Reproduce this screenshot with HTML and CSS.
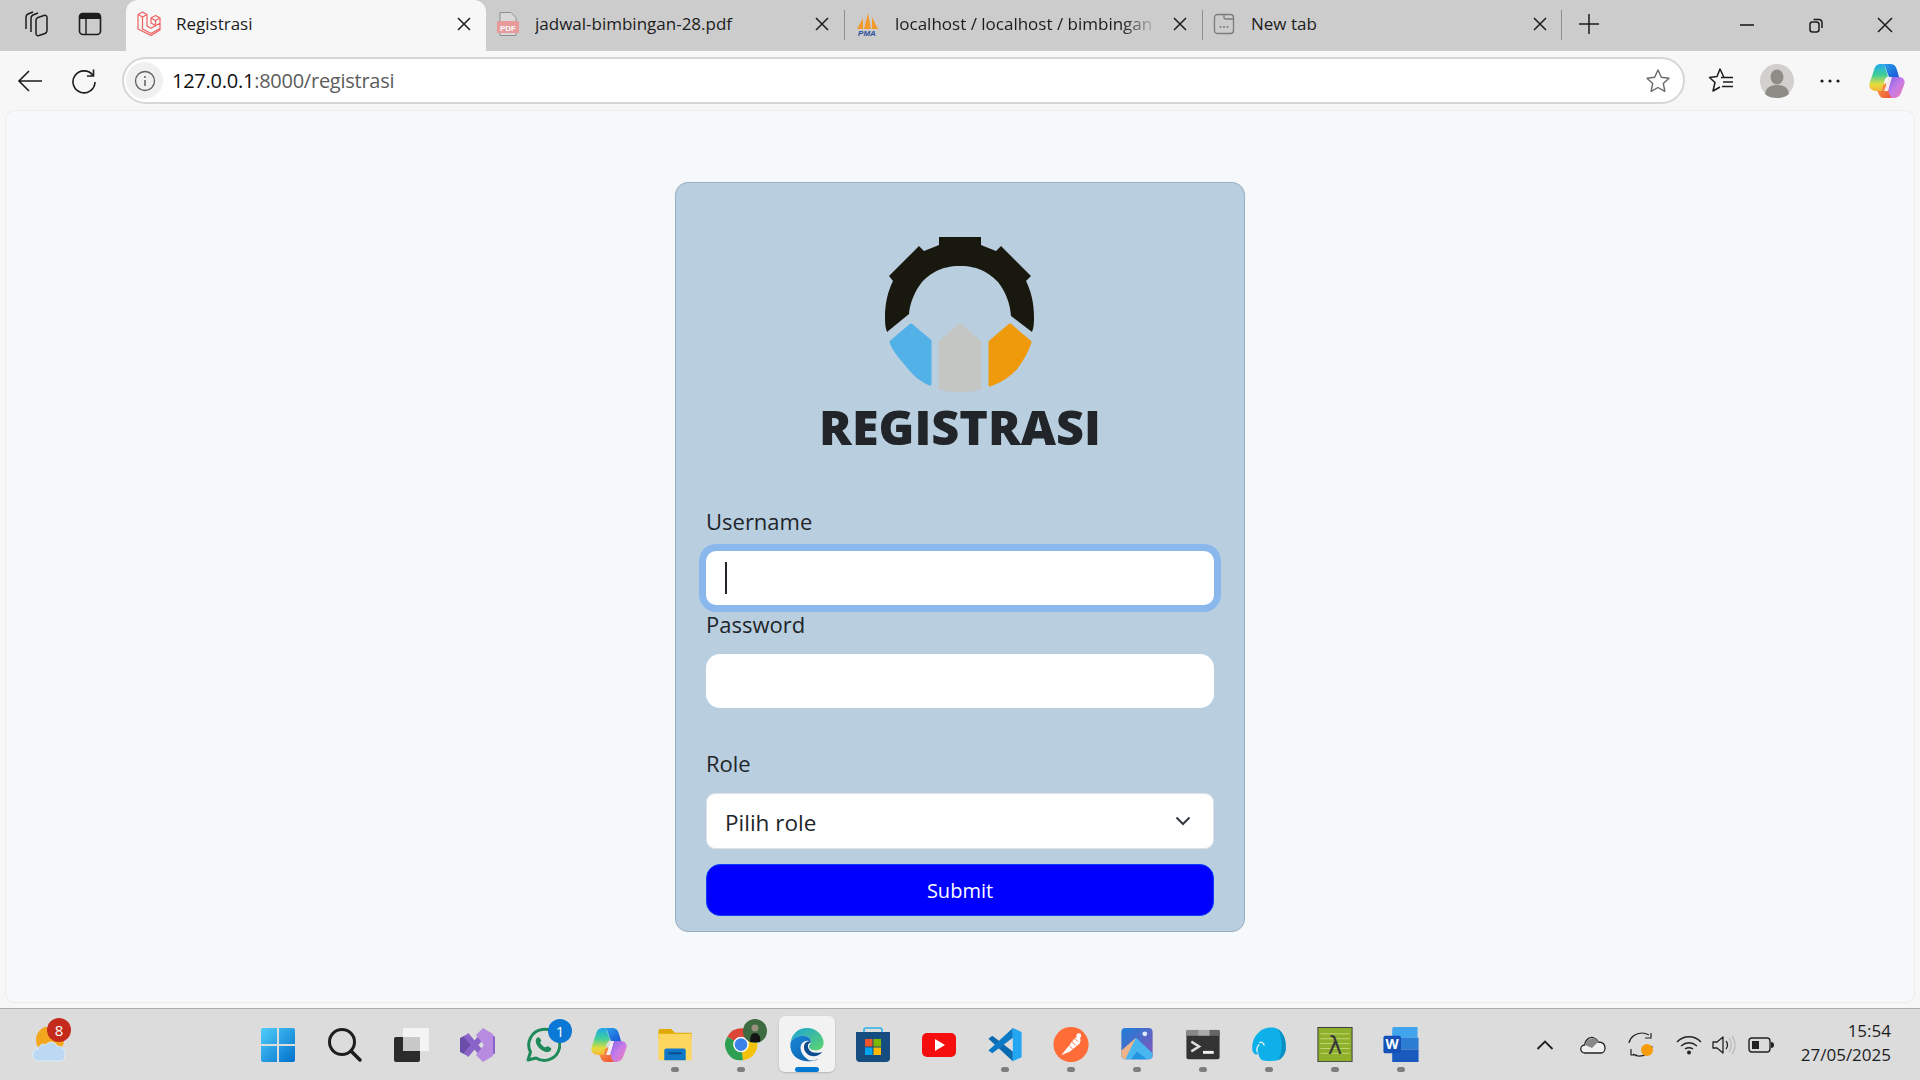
FILE: index.html
```html
<!DOCTYPE html>
<html>
<head>
    <meta charset="utf-8">
    <meta name="viewport" content="width=device-width, initial-scale=1">
    <title>Registrasi</title>
    <link rel="stylesheet" href="styles.css">
</head>
<body>

<svg class="sprite" width="0" height="0">
    <symbol id="x" viewBox="0 0 14 14"><path d="M1 1l12 12M13 1L1 13" fill="none" stroke="#1c1c1c" stroke-width="1.5"/></symbol>
    <linearGradient id="cop-left" x1="0" y1="0" x2="0" y2="1">
        <stop offset="0" stop-color="#22a8ea"/><stop offset=".4" stop-color="#3fcf9a"/><stop offset=".75" stop-color="#e6dc3c"/><stop offset="1" stop-color="#f5b53a"/>
    </linearGradient>
    <linearGradient id="cop-top" x1="0" y1="0" x2="1" y2="1">
        <stop offset="0" stop-color="#2aa6ea"/><stop offset="1" stop-color="#1a55d8"/>
    </linearGradient>
    <linearGradient id="cop-right" x1="0" y1="0" x2="1" y2="1">
        <stop offset="0" stop-color="#7a62e8"/><stop offset=".5" stop-color="#c77be8"/><stop offset="1" stop-color="#f07ab0"/>
    </linearGradient>
    <linearGradient id="cop-bot" x1="0" y1="0" x2="1" y2="1">
        <stop offset="0" stop-color="#f9a13a"/><stop offset="1" stop-color="#ee4f3a"/>
    </linearGradient>
    <symbol id="copilot" viewBox="0 0 36 36">
        <path d="M13 28H7c-5 0-8-4-6-9L5 7c1-4 3-6 7-6 3 0 4 2 5 6l2 6-3 3z" fill="url(#cop-left)"/>
        <path d="M12 1h10c3 0 5 2 6 6l2 7H20l-2-5c-1-4-2-8-6-8z" fill="url(#cop-top)"/>
        <path d="M20 14h9c5 0 8 3 6 8l-3 8c-1 3-4 5-8 5-3 0-4-2-5-5l-1-6z" fill="url(#cop-right)"/>
        <path d="M14 22l3-2 2 6c1 4 2 9 5 9H15c-3 0-5-2-6-6l-1-1h5z" fill="url(#cop-bot)"/>
        <path d="M20 14h3l-4 14h-4z" fill="#f6e9ef"/>
    </symbol>
</svg>

<header class="tabbar">
    <div class="tab-tools">
        <svg viewBox="0 0 26 26" width="26" height="26"><g fill="none" stroke="#1c1c1c" stroke-width="1.5"><path d="M13 9c0-1 1-2 2-2.500l6-2c2-.5 3 .5 3 2v13c0 1.500-1 2.500-2 3l-6 2c-2 .5-3-.5-3-2z"/><path d="M8 21V7c0-1.500 1-2.500 2-3l5-2"/><path d="M3 18V6c0-1.500 1-2.500 2-3l5-2"/></g></svg>
        <svg viewBox="0 0 26 26" width="26" height="26"><rect x="2.500" y="2.500" width="21" height="21" rx="3.500" fill="none" stroke="#1c1c1c" stroke-width="1.600"/><path d="M2 6a4 4 0 014-4h14a4 4 0 014 4v2H2z" fill="#1c1c1c"/><path d="M9 8v15" stroke="#1c1c1c" stroke-width="1.400"/></svg>
    </div>

    <div class="tab active">
        <svg class="fav" viewBox="0 0 24 25" width="24" height="25"><g fill="none" stroke="#f0605f" stroke-width="1.200" stroke-linejoin="round"><path d="M1 3.500L5.500 1 10 3.500V15l4 2.300 9-5V7M1 3.500V18l13 6.500 9-5.500v-7M1 3.500L5.500 6 10 3.500M5.500 6v12l8.500 4.500 9-5"/><path d="M14 7l4.500-2.500L23 7l-4.500 2.500zM14 7v5l4.500 2.500v-5"/></g></svg>
        <span class="tab-title">Registrasi</span>
        <svg class="tab-x"><use href="#x"/></svg>
    </div>
    <div class="tab">
        <svg class="fav" viewBox="0 0 24 26" width="24" height="26"><path d="M4 1.500h11l5 5v18H4z" fill="#d8d8d8" stroke="#8f8f8f"/><rect x="1" y="10" width="22" height="12" fill="#e79a9a"/><text x="12" y="19.500" class="pdf-txt">PDF</text></svg>
        <span class="tab-title">jadwal-bimbingan-28.pdf</span>
        <svg class="tab-x"><use href="#x"/></svg>
    </div>
    <div class="tab sep">
        <svg class="fav" viewBox="0 0 26 26" width="26" height="26"><path d="M3 18L9 7v11zM10 18l4-16 3 16zM18 18V6l6 12z" fill="#f29b2b"/><text x="13" y="25" class="pma-txt">PMA</text></svg>
        <span class="tab-title fade">localhost / localhost / bimbingan</span>
        <svg class="tab-x"><use href="#x"/></svg>
    </div>
    <div class="tab sep last">
        <svg class="fav" viewBox="0 0 24 24" width="24" height="24"><g fill="none" stroke="#7b7b7b" stroke-width="1.300"><rect x="2.500" y="2.500" width="19" height="19" rx="3"/><path d="M12 2.500v3a1.500 1.500 0 001.500 1.500h8"/></g><path d="M7.500 15h2M11 15h2M14.500 15h2" stroke="#7b7b7b" stroke-width="1.500"/></svg>
        <span class="tab-title">New tab</span>
        <svg class="tab-x"><use href="#x"/></svg>
    </div>
    <svg class="new-tab" viewBox="0 0 22 22" width="22" height="22"><path d="M11 1v20M1 11h20" stroke="#1c1c1c" stroke-width="1.500"/></svg>

    <div class="win-btns">
        <svg viewBox="0 0 16 16" width="16" height="16"><path d="M1 8h14" stroke="#1c1c1c" stroke-width="1.600"/></svg>
        <svg viewBox="0 0 16 16" width="16" height="16"><rect x="2" y="5" width="9" height="10" rx="2.500" fill="none" stroke="#1c1c1c" stroke-width="1.500"/><path d="M5.500 2.500h5.500a3 3 0 013 3V11" fill="none" stroke="#1c1c1c" stroke-width="1.500"/></svg>
        <svg viewBox="0 0 16 16" width="16" height="16"><path d="M1 1l14 14M15 1L1 15" stroke="#1c1c1c" stroke-width="1.500"/></svg>
    </div>
</header>

<nav class="toolbar">
    <svg class="nav-ico" viewBox="0 0 26 26" width="26" height="26"><path d="M25 13H2M12 3L2 13l10 10" fill="none" stroke="#1c1c1c" stroke-width="1.600"/></svg>
    <svg class="nav-ico" viewBox="0 0 26 26" width="26" height="26"><path d="M22 7.500A11 11 0 1024 14" fill="none" stroke="#1c1c1c" stroke-width="1.600"/><path d="M22.500 1.500v6.500H16" fill="none" stroke="#1c1c1c" stroke-width="1.600"/></svg>

    <div class="addr">
        <span class="addr-info">
            <svg viewBox="0 0 22 22" width="22" height="22"><circle cx="11" cy="11" r="9.500" fill="none" stroke="#5f5f5f" stroke-width="1.300"/><path d="M11 10v6" stroke="#5f5f5f" stroke-width="1.500"/><circle cx="11" cy="7" r="1" fill="#5f5f5f"/></svg>
        </span>
        <span class="url"><b>127.0.0.1</b>:8000/registrasi</span>
        <svg class="star" viewBox="0 0 26 26" width="26" height="26"><path d="M13 2l3.300 7.300 7.700.9-5.700 5.300 1.600 7.900L13 19.500l-6.900 3.900 1.600-7.900L2 10.200l7.700-.9z" fill="none" stroke="#6a6a6a" stroke-width="1.400" stroke-linejoin="round"/></svg>
    </div>

    <div class="nav-right">
        <svg viewBox="0 0 28 28" width="28" height="28"><path d="M16 10.500L12 2 9 9.500 1.500 10.500l5.500 5-2 8.500 7-4" fill="none" stroke="#1c1c1c" stroke-width="1.500" stroke-linejoin="round"/><path d="M13 10.500h12M15 15h10M14 19.500h11" stroke="#1c1c1c" stroke-width="1.500"/></svg>
        <span class="avatar"><svg viewBox="0 0 34 34" width="34" height="34"><circle cx="17" cy="17" r="17" fill="#d2d0cc"/><ellipse cx="17" cy="13" rx="6.500" ry="7.500" fill="#8f8c88"/><path d="M5 30c1-7 6-9 12-9s11 2 12 9c-3 3-8 4-12 4s-9-1-12-4z" fill="#8f8c88"/></svg></span>
        <svg viewBox="0 0 24 24" width="24" height="24"><circle cx="4" cy="12" r="1.600" fill="#1c1c1c"/><circle cx="12" cy="12" r="1.600" fill="#1c1c1c"/><circle cx="20" cy="12" r="1.600" fill="#1c1c1c"/></svg>
        <svg class="nav-copilot" viewBox="0 0 36 36" width="36" height="36"><use href="#copilot"/></svg>
    </div>
</nav>

<main class="page">
    <form class="card" action="#" onsubmit="return false">
        <svg class="logo" viewBox="0 0 150 155" width="150" height="155">
            <path d="M54 0h42v8l15 6 5-5 30 30-5 5c5 10 8 22 8 36 0 5 0 10-2 15l-21-16c-1-14-6-25-13-34-8-8-18-16-38-16s-30 8-38 16c-7 9-12 20-13 32L2 95C0 90 0 85 0 80c0-14 3-26 8-36l-4-5L34 9l5 5 15-6z" fill="#19180f"/>
            <g stroke-width="3" stroke-linejoin="round">
                <path d="M26 88l19 16v43c-8-3-15-9-20-15-7-9-16-17-19-27z" fill="#52b1e7" stroke="#52b1e7"/>
                <path d="M75 88l20 17v46c-12 4-28 4-40 0v-46z" fill="#c4c6c3" stroke="#c4c6c3"/>
                <path d="M125 88l20 17c-3 10-8 18-14 26-6 7-15 13-26 17v-43z" fill="#ef9a0a" stroke="#ef9a0a"/>
            </g>
        </svg>
        <h1 class="title">REGISTRASI</h1>

        <label class="lbl" for="username">Username</label>
        <div class="wrap-focus">
            <input class="inp focus" id="username" type="text">
            <span class="caret"></span>
        </div>

        <label class="lbl" for="password">Password</label>
        <input class="inp" id="password" type="password">

        <label class="lbl lbl-role" for="role">Role</label>
        <div class="wrap-select">
            <select class="sel" id="role">
                <option>Pilih role</option>
            </select>
            <svg class="chev" viewBox="0 0 16 10" width="16" height="10"><path d="M1.500 1.500L8 8l6.500-6.500" fill="none" stroke="#343a40" stroke-width="2"/></svg>
        </div>

        <button class="btn" type="submit">Submit</button>
    </form>
</main>

<footer class="taskbar">
    <div class="weather">
        <svg viewBox="0 0 36 36" width="36" height="36">
            <circle cx="18" cy="13" r="14" fill="#f2a71e"/>
            <path d="M7 34a6 6 0 01-1-12c1-4 5-6 8-4 2-4 9-4 11 1 5 0 8 3 8 8s-2 7-5 7z" fill="#bcd8f2" stroke="#e2eefa"/>
        </svg>
        <span class="badge red">8</span>
    </div>

    <div class="apps">
        <div class="app start">
            <svg viewBox="0 0 36 36" width="36" height="36">
                <defs><linearGradient id="w" x1="0" y1="0" x2="1" y2="1"><stop offset="0" stop-color="#50cdfb"/><stop offset="1" stop-color="#0070cc"/></linearGradient></defs>
                <path d="M1 3a2 2 0 012-2h14v16H1zM19 1h14a2 2 0 012 2v14H19zM1 19h16v16H3a2 2 0 01-2-2zM19 19h16v14a2 2 0 01-2 2H19z" fill="url(#w)"/>
            </svg>
        </div>
        <div class="app">
            <svg viewBox="0 0 36 36" width="36" height="36"><circle cx="15" cy="15" r="12.500" fill="none" stroke="#1e1e1e" stroke-width="3"/><path d="M24 24l9 9" stroke="#1e1e1e" stroke-width="3.500" stroke-linecap="round"/></svg>
        </div>
        <div class="app">
            <svg viewBox="0 0 36 36" width="36" height="36"><rect x="1" y="10" width="26" height="25" rx="2" fill="#2b2b2b"/><rect x="10" y="1" width="26" height="23" rx="1" fill="#f4f4f4"/><rect x="10" y="10" width="17" height="14" fill="#c8c8c8"/></svg>
        </div>
        <div class="app">
            <svg viewBox="0 0 36 36" width="36" height="36"><path d="M1 11l6-3 10 10-10 10-6-3z" fill="#6a4da8"/><path d="M7 8l17 20 10-4V12L24 8 7 28" fill="none" stroke="#8a63c8" stroke-width="6"/><path d="M24 1l10 6v22l-10 6-7-7 8-10-8-10z" fill="#b78be0"/></svg>
        </div>
        <div class="app">
            <svg viewBox="0 0 36 36" width="36" height="36"><path d="M3 33l2.500-8A15.500 15.500 0 1111 31z" fill="none" stroke="#1e8a5a" stroke-width="3" stroke-linejoin="round"/><path d="M12 11c2-2 3 0 4 2 1 2-2 2 0 4s3 4 5 3c2-2 3 0 5 1 1 2-1 4-4 4-5 0-13-7-11-13z" fill="#1e8a5a"/></svg>
            <span class="badge blue">1</span>
        </div>
        <div class="app">
            <svg viewBox="0 0 36 36" width="36" height="36"><use href="#copilot"/></svg>
        </div>
        <div class="app open">
            <svg viewBox="0 0 36 36" width="36" height="36"><path d="M1 4a2 2 0 012-2h11l4 4h17v6H1z" fill="#e0a800"/><path d="M1 7h34v27H1z" fill="#fcd65e"/><path d="M7 24a2 2 0 012-2h18a2 2 0 012 2v10H7z" fill="#0f78c8"/><path d="M11 27h14" stroke="#0b4f8a" stroke-width="2"/></svg>
            <i class="pill"></i>
        </div>
        <div class="app open">
            <svg viewBox="0 0 36 36" width="36" height="36">
                <path d="M18 18L4 10A16 16 0 0132 9z" fill="#db4437"/>
                <path d="M18 18L32 9a16 16 0 01-12 25z" fill="#f4c20d"/>
                <path d="M18 18l2 16A16 16 0 014 10z" fill="#2e9e50"/>
                <circle cx="18" cy="18" r="8" fill="#fff"/><circle cx="18" cy="18" r="6.500" fill="#3b82e8"/>
            </svg>
            <span class="chrome-face"><svg viewBox="0 0 24 24" width="24" height="24"><circle cx="12" cy="12" r="12" fill="#3f6b40"/><path d="M7 23c0-5 1-9 5-9s6 4 5 9z" fill="#141414"/><circle cx="12" cy="9" r="3.500" fill="#9a9080"/></svg></span>
            <i class="pill"></i>
        </div>
        <div class="app active">
            <svg viewBox="0 0 36 36" width="36" height="36">
                <defs>
                    <linearGradient id="e1" x1="0" y1="0" x2="1" y2="1"><stop offset="0" stop-color="#1aa3d8"/><stop offset="1" stop-color="#5fd66a"/></linearGradient>
                    <linearGradient id="e2" x1="0" y1="0" x2="1" y2="1"><stop offset="0" stop-color="#1888d8"/><stop offset="1" stop-color="#0b5aa8"/></linearGradient>
                </defs>
                <path d="M1 17C2 7 9 1 18 1c10 0 17 8 17 15 0 5-3 8-8 8-4 0-7-2-7-4 0-2 2-2 2-5s-3-6-8-6C8 9 2 12 1 17z" fill="url(#e1)"/>
                <path d="M1 17C2 12 8 9 14 9c5 0 8 3 8 6-3-2-8-1-10 3-2 5 1 12 8 16 3 1 7 0 10-2-3 3-7 3-12 3C8 35 0 28 1 17z" fill="url(#e2)"/>
                <path d="M22 15c-2-1-6 0-7 4-1 6 4 11 10 11 3 0 7-2 9-5-3 2-8 2-12 0-3-2-4-6-2-8 1-1 2-1 2-2z" fill="#0c4d8f"/>
            </svg>
            <i class="pill"></i>
        </div>
        <div class="app">
            <svg viewBox="0 0 36 36" width="36" height="36"><path d="M9 7V3a2 2 0 012-2h14a2 2 0 012 2v4" fill="none" stroke="#2cb0e8" stroke-width="1.600"/><path d="M1 5h34v26a4 4 0 01-4 4H5a4 4 0 01-4-4z" fill="#164d80"/><rect x="10" y="12" width="7.500" height="7.500" fill="#f0542a"/><rect x="18.500" y="12" width="7.500" height="7.500" fill="#7fba00"/><rect x="10" y="20.500" width="7.500" height="7.500" fill="#00a4ef"/><rect x="18.500" y="20.500" width="7.500" height="7.500" fill="#ffb900"/></svg>
        </div>
        <div class="app">
            <svg viewBox="0 0 36 36" width="36" height="36"><rect x="1" y="6" width="34" height="24" rx="5" fill="#f60d0d"/><path d="M14 12l10 6-10 6z" fill="#fff"/></svg>
        </div>
        <div class="app open">
            <svg viewBox="0 0 36 36" width="36" height="36"><path d="M26 35L1 12l4-3 21 16z" fill="#0a6ab0"/><path d="M26 1L1 24l4 3 21-16z" fill="#0b7ac6"/><path d="M26 1l9 4v26l-9 4z" fill="#23a7f2"/></svg>
            <i class="pill"></i>
        </div>
        <div class="app open">
            <svg viewBox="0 0 36 36" width="36" height="36"><circle cx="18" cy="18" r="18" fill="#ff6c37"/><path d="M8 29l8-10 6-8 4-1 2 3-1 4-10 8z" fill="#fff"/><circle cx="26" cy="9" r="2.500" fill="#fff"/><path d="M15 18l5 5M18 14l5 5M21 11l4 4" stroke="#ff6c37"/></svg>
            <i class="pill"></i>
        </div>
        <div class="app open">
            <svg viewBox="0 0 36 36" width="36" height="36"><defs><linearGradient id="ph" x1="0" y1="0" x2="1" y2="1"><stop offset="0" stop-color="#1a7fd8"/><stop offset="1" stop-color="#8a52b8"/></linearGradient></defs><rect x="2" y="1" width="32" height="32" rx="4" fill="url(#ph)"/><circle cx="26" cy="7" r="2.500" fill="#dbe9f8"/><path d="M2 26L17 11l17 16v2a4 4 0 01-4 4H6a4 4 0 01-4-4z" fill="#49b6f0"/><path d="M2 24L17 11l-5 10-6 12c-3 0-4-2-4-4z" fill="#f0b48a"/><path d="M12 33l6-8 10 8z" fill="#2294e0"/></svg>
            <i class="pill"></i>
        </div>
        <div class="app open">
            <svg viewBox="0 0 36 36" width="36" height="36"><path d="M1 5a2 2 0 012-2h30a2 2 0 012 2v26a2 2 0 01-2 2H3a2 2 0 01-2-2z" fill="#333"/><rect x="1" y="3" width="12" height="6" fill="#888"/><rect x="13" y="3" width="12" height="6" fill="#aaa"/><rect x="25" y="3" width="10" height="6" fill="#666"/><path d="M6 15l8 5-8 5" fill="none" stroke="#ddd" stroke-width="2.500"/><path d="M18 26h11" stroke="#eee" stroke-width="3"/></svg>
            <i class="pill"></i>
        </div>
        <div class="app open">
            <svg viewBox="0 0 36 36" width="36" height="36"><path d="M11 34c3 1 13 1 16 0l8-10c1-8-1-18-8-22-7-3-15-1-19 3C3 9 0 16 1 24c1 3 3 5 5 4l1-2c0 3 1 6 4 8z" fill="#0db0e8"/><path d="M27 2c7 4 9 14 8 22-1 5-4 9-8 10 3-4 4-9 4-15S30 6 27 2z" fill="#0a8fc4"/><path d="M8 18c-2 2-3 5-2 8M8 16c2-1 5 0 5 3" fill="none" stroke="#d7eef8" stroke-width="1.500"/></svg>
            <i class="pill"></i>
        </div>
        <div class="app open">
            <svg viewBox="0 0 36 36" width="36" height="36"><rect x=".5" y=".5" width="35" height="35" fill="#8fb02a" stroke="#3d3d3d"/><path d="M3 7h30M3 12h30M3 17h30M3 22h30M3 27h30" stroke="#c3d77a"/><text x="18" y="28" class="lambda-txt">λ</text></svg>
            <i class="pill"></i>
        </div>
        <div class="app open">
            <svg viewBox="0 0 36 36" width="36" height="36"><path d="M9 2a2 2 0 012-2h24v11H9z" fill="#41a5ee"/><rect x="9" y="11" width="27" height="12" fill="#2b7cd3"/><rect x="9" y="23" width="27" height="13" fill="#185abd"/><rect y="9" width="18" height="18" rx="2" fill="#1550b8"/><text x="9" y="23" class="word-txt">W</text></svg>
            <i class="pill"></i>
        </div>
    </div>

    <div class="tray">
        <div class="tray-item wide"><svg viewBox="0 0 18 12" width="18" height="12"><path d="M1.500 10L9 2.500 16.500 10" fill="none" stroke="#1e1e1e" stroke-width="1.800"/></svg></div>
        <div class="tray-item wide"><svg viewBox="0 0 26 18" width="26" height="18"><path d="M5 17a4 4 0 01-.500-8C5 4 10 0 14 2c2 1 4 2 4 4 4 0 7 2 7 6 0 3-2 5-4 5z" fill="#f0f0f0" stroke="#222" stroke-width="1.300"/><path d="M5 9c1-4 5-7 9-7 2 1 4 2 4 4l-6 6z" fill="#888"/></svg></div>
        <div class="tray-item wide"><svg viewBox="0 0 26 26" width="26" height="26"><path d="M1 11C2 5 8 1 14 1c3 0 5 1 7 2M23 1v5h-6M24 14c0 2-2 6-5 8-4 2-10 3-14 0M3 17v6h6" fill="none" stroke="#222" stroke-width="1.200"/><circle cx="19" cy="18" r="6" fill="#f69c0a"/></svg></div>
        <div class="tray-gap"></div>
        <div class="tray-item"><svg viewBox="0 0 26 20" width="26" height="20"><g fill="none" stroke="#222" stroke-width="1.500"><path d="M1 7c7-7 17-7 24 0M5 11c5-4 11-4 16 0M9 14c3-2 5-2 8 0"/></g><circle cx="13" cy="17.500" r="2" fill="#222"/></svg></div>
        <div class="tray-item"><svg viewBox="0 0 26 20" width="26" height="20"><path d="M1 7h4l6-5v16l-6-5H1z" fill="none" stroke="#222" stroke-width="1.300" stroke-linejoin="round"/><path d="M14 6c2 2 2 6 0 8" fill="none" stroke="#222" stroke-width="1.300"/><path d="M17 3c3 4 3 10 0 14M20 1c4 5 4 13 0 18" fill="none" stroke="#bdbdbd" stroke-width="1.300"/></svg></div>
        <div class="tray-item"><svg viewBox="0 0 26 16" width="26" height="16"><rect x="1" y="1" width="21" height="14" rx="3" fill="none" stroke="#222" stroke-width="1.400"/><rect x="4" y="4" width="7" height="8" fill="#222"/><path d="M23 5c2 0 3 1 3 3s-1 3-3 3z" fill="#222"/></svg></div>
        <div class="clock">
            <div>15:54</div>
            <div>27/05/2025</div>
        </div>
    </div>
</footer>

</body>
</html>
```

FILE: styles.css
```css
* {
    box-sizing: border-box;
}

html, body {
    margin: 0;
    height: 100%;
    overflow: hidden;
}

body {
    display: flex;
    flex-direction: column;
    font-family: "Open Sans", "Noto Sans", sans-serif;
    background-color: #f7f7f7;
    color: #212529;
}

.sprite {
    position: absolute;
}

/* browser tabs */

.tabbar {
    display: flex;
    align-items: center;
    height: 51px;
    flex: none;
    background-color: #cccccc;
}

.tab-tools {
    display: flex;
    width: 126px;
    gap: 28px;
    padding: 0 0 4px 23px;
}

.tab {
    position: relative;
    display: flex;
    align-items: center;
    width: 358px;
    height: 51px;
    padding: 0 15px 4px 10px;
    gap: 15px;
    font-size: 17px;
    color: #1c1c1c;
}

.tab.active {
    width: 360px;
    padding-left: 11px;
    background-color: #f7f7f7;
    border-radius: 12px 12px 0 0;
}

.tab.last {
    width: 360px;
}

.tab.sep::before {
    content: "";
    position: absolute;
    left: 0;
    top: 10px;
    height: 30px;
    width: 1px;
    background-color: #8f8f8f;
}

.tab.last::after {
    content: "";
    position: absolute;
    right: 0;
    top: 10px;
    height: 30px;
    width: 1px;
    background-color: #8f8f8f;
}

.fav {
    flex: none;
}

.tab-title {
    flex: 1;
    white-space: nowrap;
    overflow: hidden;
}

.tab-title.fade {
    -webkit-mask-image: linear-gradient(to right, #000 86%, transparent 100%);
    mask-image: linear-gradient(to right, #000 86%, transparent 100%);
}

.tab-x {
    width: 14px;
    height: 14px;
    flex: none;
}

.pdf-txt {
    font-family: "Liberation Sans", sans-serif;
    font-size: 8px;
    font-weight: 700;
    fill: #fff;
    text-anchor: middle;
}

.pma-txt {
    font-family: "Liberation Sans", sans-serif;
    font-size: 8px;
    font-weight: 700;
    font-style: italic;
    fill: #2a4f9c;
    text-anchor: middle;
}

.new-tab {
    margin: 0 0 4px 16px;
    flex: none;
}

.win-btns {
    display: flex;
    margin-left: auto;
    gap: 53px;
    padding: 0 27px 2px 0;
}

/* address bar row */

.toolbar {
    display: flex;
    align-items: center;
    height: 59px;
    flex: none;
    padding: 0 0 0 17px;
    background-color: #f7f7f7;
}

.nav-ico {
    flex: none;
    margin-right: 28px;
}

.addr {
    display: flex;
    align-items: center;
    margin-left: -3px;
    width: 1563px;
    height: 47px;
    padding: 0 12px 0 2px;
    background-color: #fff;
    border: 2px solid #d6d6d6;
    border-radius: 24px;
}

.addr-info {
    display: flex;
    align-items: center;
    justify-content: center;
    width: 37px;
    height: 37px;
    border-radius: 50%;
    background-color: #f0f0f0;
}

.url {
    flex: 1;
    margin-left: 9px;
    font-size: 20px;
    letter-spacing: -0.25px;
    color: #5c5c5c;
}

.url b {
    font-weight: 400;
    color: #111;
}

.star {
    flex: none;
}

.nav-right {
    display: flex;
    align-items: center;
    margin-left: 23px;
    gap: 24px;
}

.nav-copilot {
    margin-left: 3px;
}

.avatar {
    display: flex;
}

/* page */

.page {
    flex: 1;
    display: flex;
    justify-content: center;
    align-items: flex-start;
    margin: 0 5px 5px;
    padding-top: 71px;
    background-color: #f5f9fc;
    border: 1px solid #ececec;
    border-radius: 10px;
}

.card {
    display: flex;
    flex-direction: column;
    width: 570px;
    height: 750px;
    padding: 54px 30px 15px;
    background-color: #b9cfe0;
    border: 1px solid #97adc0;
    border-radius: 13px;
}

.logo {
    align-self: center;
    flex: none;
}

.title {
    margin: 0 0 45px;
    height: 68px;
    font-size: 48.5px;
    font-weight: 800;
    line-height: 68px;
    text-align: center;
    color: #212529;
}

.lbl {
    display: block;
    height: 36px;
    margin-bottom: 10px;
    font-size: 22px;
    line-height: 33px;
}

.lbl-role {
    margin-top: 39px;
}

.wrap-focus {
    position: relative;
    margin-bottom: 3px;
}

.inp {
    display: block;
    width: 100%;
    height: 54px;
    border: none;
    outline: none;
    background-color: #fff;
    border-radius: 14px;
}

.inp.focus {
    box-shadow: 0 0 0 7px #8bb8ec;
    border-radius: 10px;
}

.caret {
    position: absolute;
    left: 19px;
    top: 11px;
    width: 2px;
    height: 32px;
    background-color: #212529;
}

.wrap-select {
    position: relative;
    margin-bottom: 15px;
}

.sel {
    display: block;
    width: 100%;
    height: 56px;
    padding: 2px 0 0 18px;
    appearance: none;
    -webkit-appearance: none;
    border: 1px solid #dee2e6;
    border-radius: 9px;
    background-color: #fff;
    font-family: inherit;
    font-size: 22.5px;
    color: #212529;
}

.chev {
    position: absolute;
    right: 23px;
    top: 23px;
}

.btn {
    height: 52px;
    border: 1px solid #0a3cff;
    border-radius: 14px;
    background-color: #0000ff;
    font-family: inherit;
    font-size: 20px;
    color: #fff;
}

/* windows taskbar */

.taskbar {
    display: flex;
    align-items: flex-start;
    height: 72px;
    flex: none;
    padding-top: 7px;
    background-color: #dcdcdc;
    border-top: 1px solid #adadad;
}

.weather {
    position: relative;
    width: 246px;
    flex: none;
    padding: 11px 0 0 32px;
}

.weather .badge {
    left: 47px;
    top: 2px;
}

.apps {
    display: flex;
}

.app {
    position: relative;
    display: flex;
    flex-direction: column;
    align-items: center;
    width: 56px;
    height: 56px;
    margin: 0 5px;
    padding-top: 11px;
}

.app.start svg {
    margin-left: -3px;
}

.app.active {
    background-color: #f2f2f2;
    border-radius: 6px;
    box-shadow: 0 1px 2px #b5b5b5;
}

.app .badge {
    left: 33px;
    top: 3px;
}

.pill {
    display: block;
    width: 8px;
    height: 5px;
    margin-top: 5px;
    border-radius: 3px;
    background-color: #7d7d7d;
}

.app.active .pill {
    width: 24px;
    background-color: #0078d4;
}

.badge {
    position: absolute;
    width: 24px;
    height: 24px;
    border-radius: 50%;
    font-size: 15px;
    line-height: 24px;
    text-align: center;
    color: #fff;
}

.badge.red {
    background-color: #c42b1c;
}

.badge.blue {
    background-color: #0a78d4;
}

.chrome-face {
    position: absolute;
    left: 30px;
    top: 3px;
    display: flex;
}

.lambda-txt {
    font-family: "DejaVu Sans", sans-serif;
    font-size: 25px;
    fill: #3a3a3a;
    text-anchor: middle;
}

.word-txt {
    font-family: "Open Sans", sans-serif;
    font-size: 14px;
    font-weight: 700;
    fill: #fff;
    text-anchor: middle;
}

.tray {
    display: flex;
    align-items: center;
    margin-left: auto;
    height: 64px;
    padding: 0 29px 6px 0;
}

.tray-item {
    display: flex;
    justify-content: center;
    width: 36px;
}

.tray-item.wide {
    width: 48px;
}

.tray-gap {
    width: 6px;
}

.clock {
    width: 112px;
    margin-top: -4px;
    font-size: 17px;
    line-height: 24px;
    text-align: right;
    color: #1c1c1c;
}
```
